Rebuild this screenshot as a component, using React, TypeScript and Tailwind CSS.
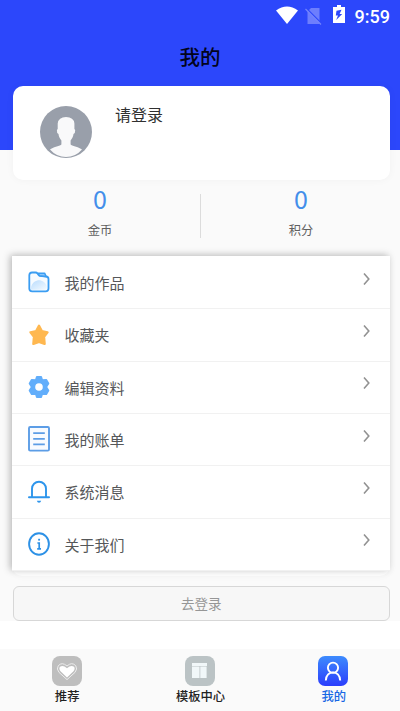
import React, { useState } from "react";

interface MenuItem {
  label: string;
  icon: React.ReactNode;
}

const FolderIcon = () => (
  <svg width="22" height="22" viewBox="0 0 22 22" fill="none">
    <defs>
      <linearGradient id="pie" x1="0" y1="0" x2="1" y2="1">
        <stop offset="0" stopColor="#b9dcfd" />
        <stop offset="1" stopColor="#f4faff" />
      </linearGradient>
    </defs>
    <path
      d="M1.3 4.2Q1.3 1.5 4 1.5H7.6Q8.8 1.5 9.5 2.5L10.4 3.8Q11 4.6 12.2 4.8L18 5.5Q20.5 5.8 20.5 8V17.5Q20.5 20.3 17.6 20.3H4.2Q1.3 20.3 1.3 17.5Z"
      fill="#f7fbff"
      stroke="#3b9df2"
      strokeWidth="1.8"
    />
    <path d="M3 18.8V16.5C4 11 8 9 12 9.2C16 10 18.8 13 18.8 16.5Q18.8 18.8 16.5 18.8Z" fill="url(#pie)" />
    <path d="M10 2.2H16.6L18.2 5.5L11.5 4.8Z" fill="#8bc6fa" stroke="#3b9df2" strokeWidth="1.5" strokeLinejoin="round" />
  </svg>
);

const StarIcon = () => (
  <svg width="22" height="22" viewBox="0 0 22 22">
    <path
      d="M11 1.8L13.8 7.1L19.5 8.3L16 12.8L16.6 19.8L11 17.9L5.4 19.8L6 12.8L2.5 8.3L8.2 7.1Z"
      fill="#ffb850"
      stroke="#ffb850"
      strokeWidth="2.4"
      strokeLinejoin="round"
    />
  </svg>
);

const GearIcon = () => (
  <svg width="22" height="24" viewBox="0 0 22 24">
    <path
      d="M8.8 2H13.2L14.2 5.2L18.2 4.8L20.4 8.5L18.2 12L20.4 15.5L18.2 19.2L14.2 18.8L13.2 22H8.8L7.8 18.8L3.8 19.2L1.6 15.5L3.8 12L1.6 8.5L3.8 4.8L7.8 5.2Z"
      fill="#62aefb"
      stroke="#62aefb"
      strokeWidth="1.8"
      strokeLinejoin="round"
    />
    <circle cx="11" cy="12" r="3.8" fill="#fff" />
  </svg>
);

const BillIcon = () => (
  <svg width="22" height="26" viewBox="0 0 22 26" fill="none" stroke="#5c9de6">
    <rect x="1" y="1" width="20" height="23.6" rx="1.2" fill="#f8fbff" strokeWidth="1.9" />
    <path d="M5.2 7.2H16.8M5.2 12.8H16.8M5.2 18.4H16.8" strokeWidth="1.7" />
  </svg>
);

const BellIcon = () => (
  <svg width="22" height="24" viewBox="0 0 22 24" fill="none" stroke="#2d95ec">
    <path d="M4 17.3V8.7A7 7 0 0 1 18 8.7V17.3" strokeWidth="1.9" />
    <path d="M1 17.3H21" strokeWidth="2" strokeLinecap="round" />
    <path d="M8.8 20.8H13.2Q12.6 22.8 11 22.8Q9.4 22.8 8.8 20.8Z" fill="#2d95ec" stroke="none" />
  </svg>
);

const InfoIcon = () => (
  <svg width="22" height="24" viewBox="0 0 22 24" fill="none" stroke="#2d91e6">
    <ellipse cx="11" cy="12" rx="9.9" ry="10.8" strokeWidth="1.9" />
    <path d="M9.4 11H11.2V16.6M9.2 16.9H13" strokeWidth="1.7" />
    <path d="M11.1 6.8V8.6" strokeWidth="1.9" />
  </svg>
);

const menuItems: MenuItem[] = [
  { label: "我的作品", icon: <FolderIcon /> },
  { label: "收藏夹", icon: <StarIcon /> },
  { label: "编辑资料", icon: <GearIcon /> },
  { label: "我的账单", icon: <BillIcon /> },
  { label: "系统消息", icon: <BellIcon /> },
  { label: "关于我们", icon: <InfoIcon /> },
];

const stats = [
  { label: "金币", value: 0 },
  { label: "积分", value: 0 },
];

const HeartTab = () => (
  <svg width="30" height="30" viewBox="0 0 30 30">
    <rect width="30" height="30" rx="8" fill="#bebebe" />
    <path
      d="M15 23.6L7 16.4Q4.2 13 6.2 9.8Q10 5.5 15 10Q20 5.5 23.8 9.8Q25.8 13 23 16.4Z"
      fill="#bebebe"
      stroke="#ededed"
      strokeWidth="1"
      strokeLinejoin="round"
    />
    <path d="M15 21.4L8.5 15.2Q6.5 12.7 8 10.8Q11 8.5 15 12.3Q19 8.5 22 10.8Q23.5 12.7 21.5 15.2Z" fill="#fff" />
  </svg>
);

const TemplateTab = () => (
  <svg width="30" height="30" viewBox="0 0 30 30">
    <rect width="30" height="30" rx="8" fill="#bbc3c5" />
    <path d="M7 7H22V10H7ZM7 10.6H14.5V22H7ZM15.3 10.6H21.6V22H15.3Z" fill="#f1f7f9" />
  </svg>
);

const ProfileTab = () => (
  <svg width="30" height="30" viewBox="0 0 30 30" fill="none">
    <defs>
      <linearGradient id="profile" x1="0" y1="0" x2="0" y2="1">
        <stop offset="0" stopColor="#3d8bfd" />
        <stop offset="1" stopColor="#2b3dfc" />
      </linearGradient>
    </defs>
    <rect width="30" height="30" rx="7" fill="url(#profile)" />
    <circle cx="15" cy="11.7" r="5.1" stroke="#fff" strokeWidth="1.9" />
    <path d="M7.8 24.5C8 13.6 22 13.6 22.2 24.5" stroke="#fff" strokeWidth="1.9" />
  </svg>
);

const tabs: MenuItem[] = [
  { label: "推荐", icon: <HeartTab /> },
  { label: "模板中心", icon: <TemplateTab /> },
  { label: "我的", icon: <ProfileTab /> },
];

const StatusBar = () => (
  <div className="flex h-8 items-start justify-end pr-[10px] text-white">
    <svg width="22" height="18" viewBox="0 0 22 18" className="mt-[6px]">
      <path d="M0 4.5Q11 -3.5 22 4.5L11 18Z" fill="#fff" />
    </svg>
    <svg width="18" height="19" viewBox="0 0 18 19" className="ml-[7px] mt-[7px]">
      <path d="M6 1H14.5V17H2.5V4.5Z" fill="#6d7efd" />
      <path d="M1.5 1.5L17 17" stroke="#2c47fb" strokeWidth="1.5" />
      <path d="M0.5 2L16 17.5" stroke="#7384fd" strokeWidth="1.3" />
    </svg>
    <svg width="12" height="18" viewBox="0 0 12 18" className="ml-[10px] mt-[5px]">
      <path d="M0 2H4V0H8V2H12V18H0Z" fill="#fff" />
      <path d="M8.5 4.8L3.5 5.8L2.8 10.4H5L3.2 15L9.2 9H6.6Z" fill="#2c47fb" />
    </svg>
    <span className="ml-[9.5px] mt-[6px] text-[18px] font-medium leading-[21px]">9:59</span>
  </div>
);

const App: React.FC = () => {
  const [activeTab, setActiveTab] = useState("我的");

  return (
    <div className="h-[711px] w-[400px] overflow-hidden bg-white font-[Roboto,'Noto_Sans_CJK_SC',sans-serif]">
      <main className="h-[621px] bg-[#fafafa]">
        {/* Header */}
        <header className="h-[150px] bg-[#2c47fb]">
          <StatusBar />
          <h1 className="pt-[11px] text-center text-[20.5px] font-medium leading-[30px] text-[#02041c]">
            我的
          </h1>
        </header>

        {/* User card */}
        <section className="relative -mt-16 ml-[12.5px] flex h-[94px] w-[377.5px] rounded-[10px] bg-white pl-[27.5px] pt-5 shadow-[0_0_8px_rgba(0,0,0,0.04)]">
          <svg width="52" height="52" viewBox="0 0 52 52">
            <circle cx="26" cy="26" r="26" fill="#999faa" />
            <path
              d="M10 43.5C13 41 19 40.5 21.4 38.5V34.5C19.5 32 18.8 30.5 18.5 28Q16.6 27 16.9 24L17.7 23V17.5Q18.5 11 26 11Q33.8 11 34.4 17.5V23L35.2 24Q35.4 27 33.5 28C33.2 30.5 32.5 32 30.6 34.5V38.5C33 40.5 39 41 42 43.5Q35.5 51 26 51Q16.5 51 10 43.5Z"
              fill="#f9f9fa"
            />
          </svg>
          <span className="ml-[23px] -mt-[2px] text-[16px] leading-6 text-[#303030]">请登录</span>
        </section>

        {/* Coins and points */}
        <section className="ml-px flex h-[76px]">
          {stats.map((stat, index) => (
            <div key={stat.label} className="relative w-[201px] shrink-0 pt-[4px] text-center first:-ml-[1.5px]">
              <div className="font-['Noto_Sans_CJK_SC',sans-serif] text-[25px] leading-[29px] text-[#438eea]">
                {stat.value}
              </div>
              <div className="mt-[8px] text-[12.3px] leading-5 text-[#606060]">{stat.label}</div>
              {index === 0 && <i className="absolute right-0 top-[14px] h-[44px] w-px bg-[#dcdcdc]" />}
            </div>
          ))}
        </section>

        {/* Menu */}
        <section className="ml-[12px] h-[320px] w-[378px] rounded-b-[10px] bg-[#fefefe] shadow-[0_0_8px_rgba(0,0,0,0.03)]">
          <ul className="bg-white pt-px shadow-[-2px_-1px_7px_rgba(0,0,0,0.25)]">
            {menuItems.map((item) => (
              <li
                key={item.label}
                className="flex h-[52.35px] cursor-pointer items-center border-b border-[#f1f1f1] pl-[16px] pr-5"
              >
                <span className="-mt-px flex w-[22px] justify-center">{item.icon}</span>
                <span className="ml-[14.5px] mt-[2.5px] flex-1 text-[15px] leading-6 text-[#555759]">
                  {item.label}
                </span>
                <svg width="7" height="12" viewBox="0 0 7 12" className="-mt-[8px]" fill="none">
                  <path d="M1 0.5L5.8 6L1 11.5" stroke="#929292" strokeWidth="1.6" />
                </svg>
              </li>
            ))}
          </ul>
        </section>

        <button className="ml-[12.5px] mt-[10px] h-[35px] w-[377.5px] rounded-[6px] border border-[#d7d7d7] bg-[#f7f7f7] pt-px text-[13.5px] text-[#969696]">
          去登录
        </button>
      </main>

      {/* Bottom tabs */}
      <nav className="mt-7 flex h-[62px] bg-[#fafafa]">
        {tabs.map((tab) => (
          <button
            key={tab.label}
            onClick={() => setActiveTab(tab.label)}
            className={`flex flex-1 flex-col items-center pt-[7px] text-[12.3px] font-medium leading-5 ${
              activeTab === tab.label ? "text-[#1767e5]" : "text-[#222222]"
            }`}
          >
            {tab.icon}
            <span className="ml-px mt-px">{tab.label}</span>
          </button>
        ))}
      </nav>
    </div>
  );
};

export default App;
